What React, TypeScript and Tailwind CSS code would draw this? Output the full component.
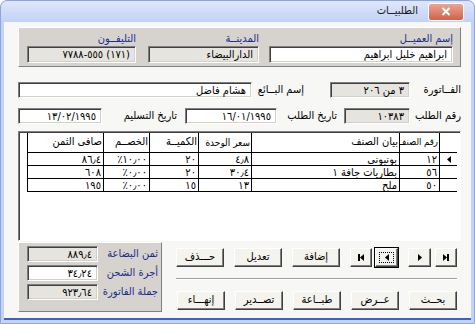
import React from "react";

const font = { fontFamily: '"DejaVu Sans Condensed", "DejaVu Sans", sans-serif' };

function Field({ w, text, white, ltr = false, h = "h-[17px]" }: { w: string; text: string; white?: boolean; ltr?: boolean; h?: string }) {
  return (
    <div
      className={`${w} ${h} shrink-0 ${white ? "bg-white" : "bg-[#e6e4df]"} border border-t-[#7f7f7f] border-l-[#7f7f7f] border-b-white border-r-white shadow-[inset_1px_1px_0_#404040,inset_-1px_-1px_0_#d4d0c8] flex items-center justify-start px-[5px] text-[11px] text-black leading-none whitespace-nowrap`}
    >
      {ltr ? <bdo dir="ltr">{text}</bdo> : <span>{text}</span>}
    </div>
  );
}

function Btn({ w = "w-[48px]", children, focus, cls = "", ltr }: { w?: string; children: React.ReactNode; focus?: boolean; cls?: string; ltr?: boolean }) {
  return (
    <div
      dir={ltr ? "ltr" : undefined}
      className={`${w} ${cls} h-[19px] shrink-0 bg-[#f4f3ee] border border-t-white border-l-white border-b-[#404040] border-r-[#404040] shadow-[inset_-1px_-1px_0_#808080] flex items-center justify-center text-[11px] text-black whitespace-nowrap ${focus ? "outline outline-1 outline-black" : ""}`}
    >
      {focus ? <div className="border border-dotted border-black w-[15px] h-[11px] flex items-center justify-center">{children}</div> : children}
    </div>
  );
}

const Tri = ({ dir }: { dir: "l" | "r" }) => (
  <svg width="4" height="7" viewBox="0 0 4 7">
    {dir === "l" ? <path d="M4 0 L0 3.5 L4 7 Z" fill="#000" /> : <path d="M0 0 L4 3.5 L0 7 Z" fill="#000" />}
  </svg>
);

const Bar = () => <div className="w-[2px] h-[7px] bg-black" />;

const cols = [
  { w: "w-[18px]", h: "", t: "" },
  { w: "w-[40px]", h: "رقم الصنف", t: "text-[9.5px] tracking-[-0.3px]" },
  { w: "w-[148px]", h: "بيان الصنف", t: "text-[11px]" },
  { w: "w-[53px]", h: "سعر الوحدة", t: "text-[10px] tracking-[-0.2px]" },
  { w: "w-[49px]", h: "الكميــة", t: "text-[11px]" },
  { w: "w-[46px]", h: "الخصــم", t: "text-[11px]" },
  { w: "w-[76px]", h: "صافى الثمن", t: "text-[11px]" },
];

const rows = [
  ["١٢", "بونبونى", "٤٫٨", "٢٠", "٪١٠٫٠٠", "٨٦٫٤"],
  ["٥٦", "بطاريات جافة ١", "٣٠٫٤", "٢٠", "٪٠٫٠٠", "٦٠٨"],
  ["٥٠", "ملح", "١٣", "١٥", "٪٠٫٠٠", "١٩٥"],
];

const lbl = "text-[11px] text-black whitespace-nowrap shrink-0";
const blue = "text-[11px] text-[#1b2b8c] whitespace-nowrap h-[15px] leading-[15px]";

export default function App() {
  return (
    <div className="w-[475px] h-[324px] bg-white overflow-hidden" style={font}>
      <div className="w-[475px] h-[324px] flex flex-col bg-[#c4d3f5] border border-[#8ea6e0] rounded-t-[7px]">
        {/* title bar */}
        <div className="h-[21px] flex items-center justify-end pr-[10px] bg-gradient-to-b from-[#dfe7fa] to-[#c2d2f4] rounded-t-[7px] shrink-0">
          <span className="text-[11px] text-[#1a1a1a] mr-[10px]">الطلبيــات</span>
          <div className="w-[36px] h-[18px] rounded-[3px] bg-gradient-to-b from-[#eaa592] to-[#d0604a] border border-white flex items-center justify-center">
            <svg width="10" height="9" viewBox="0 0 10 9">
              <path d="M1.5 1 L8.5 8 M8.5 1 L1.5 8" stroke="#fff" strokeWidth="2" />
            </svg>
          </div>
        </div>
        {/* body */}
        <div dir="rtl" className="flex-1 min-w-0 mx-[3px] mb-[3px] bg-[#f7f7f5] border-b-2 border-[#3e62c2] pr-[10px] pl-[13px] pt-[5px] flex flex-col">
          {/* customer panel */}
          <div className="h-[40px] w-[443px] bg-[#d6d3ce] border border-t-white border-l-white border-b-[#808080] border-r-[#808080] flex pr-[7px] pt-[3px]">
            <div className="flex flex-col w-[184px]">
              <span className={blue}>إسم العميــل</span>
              <Field w="w-[184px]" text="ابراهيم خليل ابراهيم" white />
            </div>
            <div className="flex flex-col w-[111px] mr-[10px]">
              <span className={blue}>المدينــة</span>
              <Field w="w-[111px]" text="الدارالبيضاء" />
            </div>
            <div className="flex flex-col w-[109px] mr-[12px]">
              <span className={blue}>التليفــون</span>
              <Field w="w-[109px]" text="٧٧٨٨-٥٥٥ (١٧١)" ltr />
            </div>
          </div>
          {/* row 2 */}
          <div className="flex items-center mt-[15px] h-[16px] w-[443px]">
            <span className={`${lbl} w-[51px]`}>الفــاتورة</span>
            <Field w="w-[80px]" text="٣ من ٢٠٦" h="h-[16px]" />
            <span className={`${lbl} w-[52px] mr-[26px]`}>إسم البــائع</span>
            <Field w="w-[234px]" text="هشام فاضل" white h="h-[16px]" />
          </div>
          {/* row 3 */}
          <div className="flex items-center mt-[10px] h-[16px] w-[443px]">
            <span className={`${lbl} w-[51px]`}>رقم الطلب</span>
            <Field w="w-[66px]" text="١٠٣٨٣" h="h-[16px]" ltr />
            <span className={`${lbl} w-[60px] mr-[7px]`}>تاريخ الطلب</span>
            <Field w="w-[92px]" text="١٦/٠١/١٩٩٥" white h="h-[16px]" ltr />
            <span className={`${lbl} w-[75px] mr-[8px]`}>تاريخ التسليم</span>
            <Field w="w-[84px]" text="١٣/٠٢/١٩٩٥" white h="h-[16px]" ltr />
          </div>
          {/* grid */}
          <div className="mt-[7px] h-[110px] w-[443px] bg-white border border-t-[#808080] border-l-[#808080] border-b-white border-r-white shadow-[inset_1px_1px_0_#404040] overflow-hidden">
            <div className="flex pt-[1px] pr-[3px]">
              {cols.map((c, i) => (
                <div key={i} className={`${c.w} ${c.t} h-[20px] shrink-0 border-l border-b border-black text-black px-[1px] flex items-center whitespace-nowrap overflow-hidden`}>
                  {c.h}
                </div>
              ))}
            </div>
            {rows.map((r, ri) => (
              <div key={ri} className="flex pr-[3px]">
                <div className="w-[18px] h-[13px] shrink-0 border-l border-b border-black flex items-center justify-center">
                  {ri === 0 ? <Tri dir="l" /> : null}
                </div>
                {r.map((v, ci) => (
                  <div
                    key={ci}
                    className={`${cols[ci + 1].w} h-[13px] shrink-0 border-l border-b border-black text-[11px] leading-none text-black px-[2px] flex items-center justify-start whitespace-nowrap overflow-hidden`}
                  >
                    {ci === 1 ? <span>{v}</span> : <bdo dir="ltr">{v}</bdo>}
                  </div>
                ))}
              </div>
            ))}
          </div>
          {/* bottom */}
          <div className="flex mt-[1px] w-[443px]">
            <div className="flex flex-col w-[285px] pt-[6px] pr-[4px]">
              <div className="flex h-[19px]">
                <Btn w="w-[22px]" ltr><Tri dir="r" /><Bar /></Btn>
                <Btn w="w-[23px]" cls="mr-[4px]" ltr><Tri dir="r" /></Btn>
                <Btn w="w-[23px]" cls="mr-[10px]" focus ltr><Tri dir="l" /></Btn>
                <Btn w="w-[22px]" cls="mr-[3px]" ltr><Bar /><Tri dir="l" /></Btn>
                <Btn cls="mr-[10px]">إضافة</Btn>
                <Btn cls="mr-[10px]">تعديل</Btn>
                <Btn cls="mr-[10px]">حـــذف</Btn>
              </div>
              <div className="h-[2px] border-t border-[#a0a0a0] border-b border-b-white mt-[11px] mb-[11px]" />
              <div className="flex h-[19px]">
                <Btn>بحــث</Btn>
                <Btn cls="mr-[10px]">عــرض</Btn>
                <Btn cls="mr-[10px]">طبــاعة</Btn>
                <Btn cls="mr-[10px]">تصــدير</Btn>
                <Btn cls="mr-[10px]">إنهـــاء</Btn>
              </div>
            </div>
            <div className="flex-1" />
            <div className="w-[144px] h-[70px] bg-[#d6d3ce] border border-t-white border-l-white border-b-[#808080] border-r-[#808080] flex flex-col gap-[3px] pt-[3px] pr-[3px]">
              {[
                ["ثمن البضاعة", "٨٨٩٫٤", false],
                ["أجرة الشحن", "٣٤٫٢٤", true],
                ["جملة الفاتورة", "٩٢٣٫٦٤", false],
              ].map(([l, v, w], i) => (
                <div key={i} className="flex items-center h-[16px]">
                  <span className="w-[60px] shrink-0 text-[11px] text-[#1b2b8c] whitespace-nowrap">{l as string}</span>
                  <Field w="w-[71px]" h="h-[16px]" text={v as string} white={w as boolean} ltr />
                </div>
              ))}
            </div>
          </div>
        </div>
      </div>
    </div>
  );
}
